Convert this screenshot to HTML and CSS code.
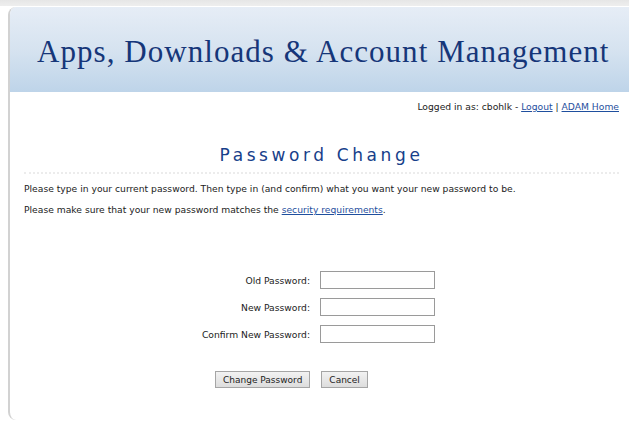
FILE: index.html
```html
<!DOCTYPE html>
<html>
<head>
<meta charset="utf-8">
<title>Password Change</title>
<link rel="stylesheet" href="styles.css">
</head>
<body>
<div class="frame">
  <div class="shell">
    <header class="banner">
      <h1 class="banner-title">Apps, Downloads &amp; Account Management</h1>
    </header>
    <main class="content">
      <div class="userbar">Logged in as: cbohlk - <a href="#">Logout</a> | <a href="#">ADAM Home</a></div>
      <h2 class="page-title">Password Change</h2>
      <p class="note">Please type in your current password. Then type in (and confirm) what you want your new password to be.</p>
      <p class="note">Please make sure that your new password matches the <a href="#">security requirements</a>.</p>
      <form class="pw-form">
        <div class="fields">
          <label for="old">Old Password:</label><input id="old" type="password">
          <label for="new">New Password:</label><input id="new" type="password">
          <label for="confirm">Confirm New Password:</label><input id="confirm" type="password">
        </div>
        <div class="actions">
          <button type="button">Change Password</button>
          <button type="button">Cancel</button>
        </div>
      </form>
    </main>
  </div>
</div>
</body>
</html>
```
FILE: styles.css
```css
html, body {
  margin: 0;
  padding: 0;
  background: #ffffff;
}

.frame {
  height: 423px;
  overflow: hidden;
  background: linear-gradient(#e6e6e6, #eeeeee 6px, #ffffff 6px);
  padding: 7px 0 0 8px;
  box-sizing: border-box;
}

.shell {
  height: 413px;
  border-left: 2px solid #d2d2d2;
  border-radius: 8px 0 0 8px;
  background: #ffffff;
  overflow: hidden;
}

.banner {
  height: 85px;
  background: linear-gradient(#e6edf6, #d6e3f0 50%, #bed4e9);
  display: flex;
  align-items: center;
  padding-left: 27px;
}

.banner-title {
  margin: 0;
  font-family: "Liberation Serif", "DejaVu Serif", serif;
  font-weight: normal;
  font-size: 31px;
  letter-spacing: 1.05px;
  color: #163679;
  white-space: nowrap;
  padding-top: 4px;
}

.content {
  padding: 0 10px 0 14px;
  font-family: "DejaVu Sans", Verdana, sans-serif;
  font-size: 9.2px;
  color: #222222;
}

.content a {
  color: #1f4f9e;
}

.userbar {
  text-align: right;
  padding-top: 9px;
  height: 14px;
}

.page-title {
  margin: 30px 0 0;
  text-align: center;
  font-family: "DejaVu Sans", Verdana, sans-serif;
  font-weight: normal;
  font-size: 17px;
  letter-spacing: 3.6px;
  color: #17408a;
  padding-bottom: 7px;
  border-bottom: 2px dotted #ececec;
}

.note {
  margin: 8px 0 0;
  line-height: 13px;
}

.note + .note {
  margin-top: 8px;
}

.pw-form {
  margin-top: 55px;
}

.fields {
  display: grid;
  grid-template-columns: 286px 115px;
  column-gap: 10px;
  row-gap: 9px;
  align-items: center;
}

.fields label {
  text-align: right;
}

.fields input {
  width: 115px;
  height: 18px;
  box-sizing: border-box;
  border: 1px solid #9a9a9a;
  margin: 0;
  padding: 1px 3px;
}

.actions {
  display: flex;
  gap: 11px;
  margin-top: 28px;
  padding-left: 191px;
}

.actions button {
  font-family: "DejaVu Sans", Verdana, sans-serif;
  font-size: 9px;
  color: #222222;
  background: linear-gradient(#f2f2f2, #dddddd);
  border: 1px solid #a5a5a5;
  height: 17px;
  padding: 0 7px;
}
```
